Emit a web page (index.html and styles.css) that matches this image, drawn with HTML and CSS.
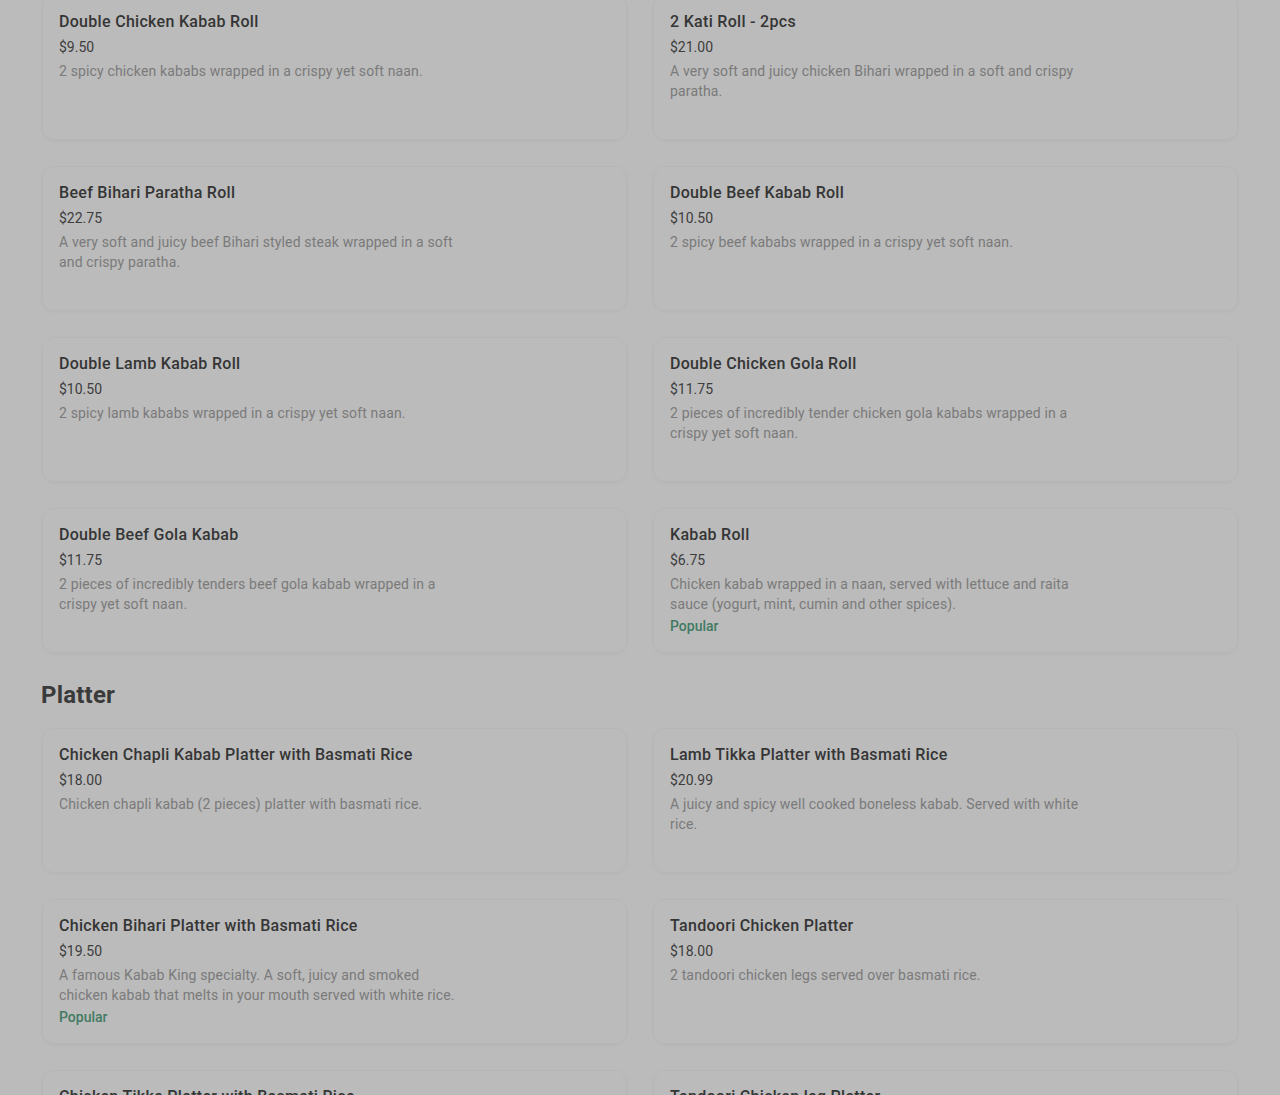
FILE: index.html
```html
<!DOCTYPE html>
<html lang="en">
<head>
    <meta charset="UTF-8">
    <title>Menu</title>
    <link rel="stylesheet" href="styles.css">
</head>
<body>
<main class="menu">
    <!--卷饼-->
    <section class="menu_section">
        <ul class="item_grid">
            <li class="item_card">
                <h3 class="item_name">Double Chicken Kabab Roll</h3>
                <div class="item_price">$9.50</div>
                <p class="item_desc">2 spicy chicken kababs wrapped in a crispy yet soft naan.</p>
            </li>
            <li class="item_card">
                <h3 class="item_name">2 Kati Roll - 2pcs</h3>
                <div class="item_price">$21.00</div>
                <p class="item_desc">A very soft and juicy chicken Bihari wrapped in a soft and crispy paratha.</p>
            </li>
            <li class="item_card">
                <h3 class="item_name">Beef Bihari Paratha Roll</h3>
                <div class="item_price">$22.75</div>
                <p class="item_desc">A very soft and juicy beef Bihari styled steak wrapped in a soft and crispy paratha.</p>
            </li>
            <li class="item_card">
                <h3 class="item_name">Double Beef Kabab Roll</h3>
                <div class="item_price">$10.50</div>
                <p class="item_desc">2 spicy beef kababs wrapped in a crispy yet soft naan.</p>
            </li>
            <li class="item_card">
                <h3 class="item_name">Double Lamb Kabab Roll</h3>
                <div class="item_price">$10.50</div>
                <p class="item_desc">2 spicy lamb kababs wrapped in a crispy yet soft naan.</p>
            </li>
            <li class="item_card">
                <h3 class="item_name">Double Chicken Gola Roll</h3>
                <div class="item_price">$11.75</div>
                <p class="item_desc">2 pieces of incredibly tender chicken gola kababs wrapped in a crispy yet soft naan.</p>
            </li>
            <li class="item_card">
                <h3 class="item_name">Double Beef Gola Kabab</h3>
                <div class="item_price">$11.75</div>
                <p class="item_desc">2 pieces of incredibly tenders beef gola kabab wrapped in a crispy yet soft naan.</p>
            </li>
            <li class="item_card">
                <h3 class="item_name">Kabab Roll</h3>
                <div class="item_price">$6.75</div>
                <p class="item_desc">Chicken kabab wrapped in a naan, served with lettuce and raita sauce (yogurt, mint, cumin and other spices).</p>
                <span class="item_tag">Popular</span>
            </li>
        </ul>
    </section>

    <!--拼盘-->
    <section class="menu_section">
        <h2 class="section_title">Platter</h2>
        <ul class="item_grid">
            <li class="item_card">
                <h3 class="item_name">Chicken Chapli Kabab Platter with Basmati Rice</h3>
                <div class="item_price">$18.00</div>
                <p class="item_desc">Chicken chapli kabab (2 pieces) platter with basmati rice.</p>
            </li>
            <li class="item_card">
                <h3 class="item_name">Lamb Tikka Platter with Basmati Rice</h3>
                <div class="item_price">$20.99</div>
                <p class="item_desc">A juicy and spicy well cooked boneless kabab. Served with white rice.</p>
            </li>
            <li class="item_card">
                <h3 class="item_name">Chicken Bihari Platter with Basmati Rice</h3>
                <div class="item_price">$19.50</div>
                <p class="item_desc">A famous Kabab King specialty. A soft, juicy and smoked chicken kabab that melts in your mouth served with white rice.</p>
                <span class="item_tag">Popular</span>
            </li>
            <li class="item_card">
                <h3 class="item_name">Tandoori Chicken Platter</h3>
                <div class="item_price">$18.00</div>
                <p class="item_desc">2 tandoori chicken legs served over basmati rice.</p>
            </li>
            <li class="item_card">
                <h3 class="item_name">Chicken Tikka Platter with Basmati Rice</h3>
                <div class="item_price">$18.00</div>
                <p class="item_desc">Chicken tikka platter with basmati rice.</p>
            </li>
            <li class="item_card">
                <h3 class="item_name">Tandoori Chicken leg Platter</h3>
                <div class="item_price">$18.00</div>
                <p class="item_desc">Tandoori chicken legs with basmati rice.</p>
            </li>
        </ul>
    </section>
</main>
</body>
</html>
```

FILE: styles.css
```css
*{
    margin: 0;
    padding: 0;
    box-sizing: border-box;
}
body{
    background-color: #bbbbbb;
    font-family: Roboto, "Liberation Sans", sans-serif;
    color: #333333;
    height: 1095px;
    overflow: hidden;
}
.menu{
    padding: 0 42px;
    margin-top: -5px;
}
.section_title{
    font-size: 24px;
    line-height: 32px;
    font-weight: 700;
    color: #3a3a3a;
    letter-spacing: 0.2px;
    margin: 26px 0 17px -1px;
}
.item_grid{
    list-style: none;
    display: grid;
    grid-template-columns: 1fr 1fr;
    column-gap: 26px;
    row-gap: 26px;
}
.item_card{
    height: 145px;
    padding: 16px 16px 0 16px;
    border-radius: 12px;
    border: 1px solid rgba(0,0,0,0.025);
    box-shadow: 0 1px 3px rgba(0,0,0,0.035);
}
.item_name{
    font-size: 16px;
    line-height: 20px;
    font-weight: 500;
    letter-spacing: 0.3px;
    color: #353535;
    white-space: nowrap;
}
.item_price{
    margin-top: 5px;
    font-size: 14px;
    line-height: 20px;
    color: #3d3d3d;
}
.item_desc{
    margin-top: 4px;
    max-width: 409px;
    font-size: 14px;
    line-height: 20px;
    letter-spacing: 0.15px;
    color: #7a7a7a;
}
.item_tag{
    display: block;
    margin-top: 2px;
    font-size: 14px;
    line-height: 20px;
    font-weight: 500;
    color: #437a62;
}
```
